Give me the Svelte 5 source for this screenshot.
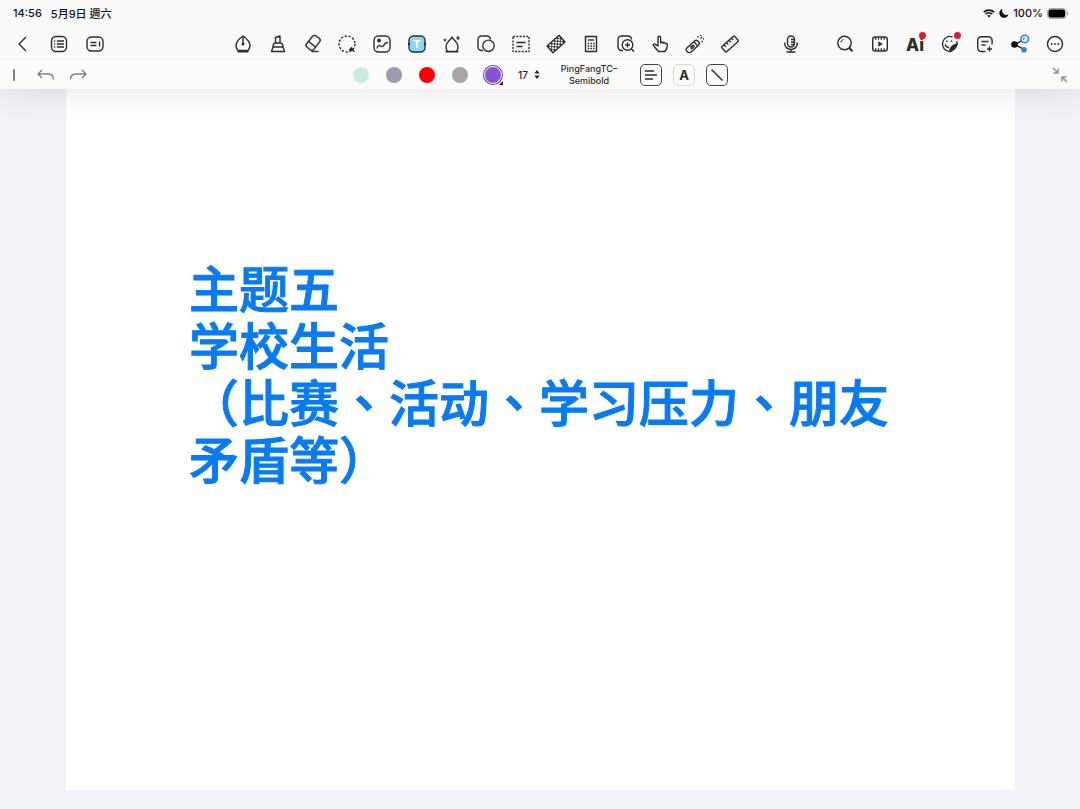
<script>
    const tools = [
        { label: 'Pen', icon: '<path d="M10 2C6.500 4.500 3 8 3 11.500c0 2 1 3.300 2 5h10c1-1.700 2-3 2-5C17 8 13.500 4.500 10 2z"/><path d="M10 2v8M4.500 17.800h11"/><circle cx="10" cy="10" r=".8" fill="currentColor"/>' },
        { label: 'Highlighter', icon: '<path d="M7.500 9V3.500L12 2v7M5 13c0-3 1-4 3-4h4c2 0 3 1 3 4zM5 13l-1.500 4.500h13L15 13"/>' },
        { label: 'Eraser', icon: '<g transform="rotate(38 10 9)"><rect x="5.500" y="1.500" width="9" height="14.500" rx="2.500"/><path d="M5.500 10.500h9"/></g><path d="M8.500 17.500h7"/>' },
        { label: 'Lasso', icon: '<circle cx="10" cy="10" r="8" stroke-dasharray="2.300 1.600"/><path d="M12 16l2.500-2.800 1 1.800 2 2.500-2.500-1z" fill="currentColor" stroke-width="1"/>' },
        { label: 'Image', icon: '<rect x="2" y="2" width="16" height="16" rx="4.500"/><circle cx="7" cy="6.500" r="1.200" fill="currentColor"/><path d="M5 14.500c.5-3 2-3.500 3.500-2.500s3 .5 3.500-1 2-2.500 4-2.500"/>' },
        { label: 'Text', icon: '<rect x="2" y="2" width="16" height="16" rx="4.500" fill="#8dd6f6"/><circle cx="2" cy="10" r="1.200" fill="currentColor" stroke="none"/><circle cx="18" cy="10" r="1.200" fill="currentColor" stroke="none"/><text x="10" y="14" text-anchor="middle" font-size="11" font-weight="700" fill="#fff" stroke="none">T</text>' },
        { label: 'Elements', icon: '<path d="M10 3c-1.500 3.500-6 5-6 9.500 0 2 .6 3.500 1.500 5h9c.9-1.500 1.500-3 1.500-5C16 8 11.500 6.500 10 3zM3.500 17.800h13"/><path d="M3 4.500v3M1.500 6h3M16 2v4M14 4h4" stroke-width="1.200"/>' },
        { label: 'Shapes', icon: '<path d="M7 16.500H5.500a3.500 3.500 0 0 1-3.500-3.500V5.500A3.500 3.500 0 0 1 5.500 2H11a3.500 3.500 0 0 1 3.500 3.500"/><circle cx="12.500" cy="11.800" r="5.700"/>' },
        { label: 'Text frame', icon: '<rect x="2" y="2.500" width="16" height="15" stroke-dasharray="2 1.300"/><path d="M5.500 8.500h9M5.500 12.500h6"/>' },
        { label: 'Tape', icon: '<g transform="rotate(-42 10 10)"><rect x="2" y="5.500" width="16" height="9"/><path d="M2 7h16M2 11h16" stroke-width="2" stroke-dasharray="2 2"/><path d="M4 9h14M4 13h14" stroke-width="2" stroke-dasharray="2 2"/></g>' },
        { label: 'Calculator', icon: '<rect x="4.500" y="2.500" width="11" height="15"/><path d="M7 6h6"/><path d="M6.700 9.500h7M6.700 12h7M6.700 14.500h7" stroke-dasharray="1.500 1.200"/>' },
        { label: 'Zoom window', icon: '<path d="M7 16.500H5.500A3.500 3.500 0 0 1 2 13V5.500A3.500 3.500 0 0 1 5.500 2H12a3.500 3.500 0 0 1 3.500 3.500"/><circle cx="11.500" cy="11" r="5.300"/><path d="M9 11h5M11.500 8.500v5M15.300 14.800l2.800 3"/>' },
        { label: 'Hand', icon: '<path d="M8 12V3.500a1.300 1.300 0 0 1 2.600 0V9c.2-1.300 2.300-1.300 2.500.2.400-1 2.200-.8 2.300.6.500-.8 2-.5 2 .9 0 2.300-.4 4.300-2.400 6.800H8.500C6.800 16 5.500 14 3.500 11.500c-.8-1.200.7-2.200 1.800-1.200z"/>' },
        { label: 'Laser pointer', icon: '<g transform="rotate(-42 8 12)"><rect x="0" y="9.300" width="15" height="5.800" rx="2.500"/><path d="M11.500 9.500V15"/><rect x="5" y="11.300" width="4" height="1.800" rx=".9"/></g><path d="M13 3.500V2M15.500 4.500L17 3M16.500 7.500H18M15.800 2V1M18 5l1-.2"/>' },
        { label: 'Ruler', icon: '<g transform="rotate(-42 10 10)"><rect x="1.500" y="6.500" width="17" height="7" rx=".8"/><path d="M5 6.500v2.800M8.300 6.500v2.800M11.700 6.500v2.800M15 6.500v2.800"/></g>' }
    ];

    const actions = [
        { label: 'Search', icon: '<circle cx="9.500" cy="9" r="6.700"/><path d="M14.300 14l3.200 3.300" stroke-width="2"/><path d="M5.800 8.500A3.500 3.500 0 0 1 8.500 5.500" stroke-width="1"/>' },
        { label: 'Playback', icon: '<rect x="2.700" y="3" width="14.600" height="14" rx="2.500"/><path d="M5 4.800h11M5 15.200h11" stroke-width="2" stroke-dasharray="1.300 1.500"/><path d="M8.300 7.300v5.400l4.500-2.700z" fill="currentColor" stroke="none"/>' },
        { label: 'AI', badge: true, icon: '<text x="10" y="17" text-anchor="middle" font-size="17" font-weight="800" fill="currentColor" stroke="none">Ai</text>' },
        { label: 'Stickers', badge: true, icon: '<path d="M12.500 2.800A7.600 7.600 0 1 0 10 17.600c3.500-1.600 6-4 7-7.600.2-1-.1-2-.4-2.700"/><path d="M10 17.600c0-4 2.500-6.500 7-7.600-1 3.600-3.500 6-7 7.600z" fill="currentColor"/><path d="M5 10.500c.7 2 2.200 3 4 3M6.800 6.500v1.500M11.500 6.500v1.500"/>' },
        { label: 'Add note', icon: '<path d="M10.500 17.500H6.500A3.800 3.800 0 0 1 2.700 13.700V6.500a3.800 3.800 0 0 1 3.800-3.800h6.800a3.800 3.800 0 0 1 3.800 3.800v4M6.500 7.500h7M6.500 11h4M14.500 12.500v5M12 15h5"/>' },
        { label: 'Share', icon: '<path d="M5 10.500l8-4.500M5 10.500l9 5" stroke="#111"/><circle cx="4.500" cy="10.500" r="3.300" fill="#111" stroke="none"/><circle cx="14.700" cy="5" r="3.800" fill="#e9f3fe" stroke="#2f83de" stroke-width="1.600"/><path d="M13.500 6V4.200h2" stroke="#2f83de" stroke-width="1"/><circle cx="14" cy="15.700" r="2.800" fill="#2f83de" stroke="none"/>' },
        { label: 'More', icon: '<circle cx="10" cy="10" r="7.500"/><g fill="currentColor" stroke="none"><circle cx="6.700" cy="10" r=".9"/><circle cx="10" cy="10" r=".9"/><circle cx="13.300" cy="10" r=".9"/></g>' }
    ];

    const colors = [
        { name: 'Mint', value: '#c9ebe2' },
        { name: 'Slate', value: '#9a9bb3' },
        { name: 'Red', value: '#fe0000' },
        { name: 'Gray', value: '#a6a6a6' },
        { name: 'Purple', value: '#8a52cc' }
    ];

    let selectedTool = $state('Text');
    let selectedColor = $state('Purple');
    let fontSize = $state('17');

    const text = '主题五\n学校生活\n（比赛、活动、学习压力、朋友矛盾等）';
</script>

{#snippet icon(body)}
    <svg viewBox="0 0 20 20" aria-hidden="true">{@html body}</svg>
{/snippet}

<div class="app">
    <header>
        <div class="status">
            <span>14:56</span>
            <span>5月9日 週六</span>
            <span class="system">
                <svg class="wifi" viewBox="0 0 12 9" aria-hidden="true"><path d="M.8 3.200a7.500 7.500 0 0 1 10.400 0M2.700 5.200a4.700 4.700 0 0 1 6.600 0" fill="none" stroke="#111" stroke-width="1.700"/><path d="M4.300 6.700a2.500 2.500 0 0 1 3.400 0L6 8.500z" fill="#111"/></svg>
                <svg class="moon" viewBox="0 0 10 10" aria-hidden="true"><path d="M3.500.7A4.700 4.700 0 1 0 9.500 6.600 4.500 4.500 0 0 1 3.500.7z" fill="#111"/></svg>
                <span>100%</span>
                <svg class="battery" viewBox="0 0 22 11" aria-hidden="true"><rect x=".5" y=".5" width="18.500" height="10" rx="3" fill="#ddd" stroke="#aaa"/><rect x="1.500" y="1.500" width="16.500" height="8" rx="2" fill="#000"/><path d="M20.500 4v3" stroke="#aaa" stroke-width="1.300"/></svg>
            </span>
        </div>

        <div class="toolbar">
            <nav class="left">
                <button aria-label="Back">{@render icon('<path d="M13 3L6 10l7 7"/>')}</button>
                <button aria-label="Outline">{@render icon('<rect x="2.500" y="2.500" width="15" height="15" rx="4.500"/><path d="M8 7h7M8 10h7M8 13h7"/><path d="M5 7h1.200M5 10h1.200M5 13h1.200"/>')}</button>
                <button aria-label="Pages">{@render icon('<rect x="2" y="3" width="16" height="14" rx="4.500"/><path d="M5.500 8.500h6M5.500 11.500h6M14.500 7.500v5"/>')}</button>
            </nav>
            <div class="tools">
                {#each tools as tool}
                    <button aria-label={tool.label} aria-pressed={selectedTool === tool.label} onclick={() => (selectedTool = tool.label)}>
                        {@render icon(tool.icon)}
                    </button>
                {/each}
            </div>
            <button class="mic" aria-label="Record">{@render icon('<rect x="6.500" y="2" width="7" height="11" rx="3.500"/><path d="M3.800 8.500v1.500a6.200 5.500 0 0 0 12.400 0V8.500M10 15.500V18M5.500 18h9M10 5.500h3M10 8h3M10 10.500h3"/>')}</button>
            <div class="actions">
                {#each actions as action}
                    <button aria-label={action.label}>
                        {@render icon(action.icon)}
                        {#if action.badge}<i class="badge"></i>{/if}
                    </button>
                {/each}
            </div>
        </div>

        <div class="options">
            <div class="history">
                <span class="grip"></span>
                <button aria-label="Undo">{@render icon('<path d="M6 5L2 9l4 4M2 9h10c3.500 0 5.500 2 5.500 5.500"/>')}</button>
                <button aria-label="Redo">{@render icon('<path d="M14 5l4 4-4 4M18 9H8c-3.500 0-5.500 2-5.500 5.500"/>')}</button>
            </div>
            <div class="format">
                {#each colors as color}
                    <button
                        class="swatch"
                        class:active={selectedColor === color.name}
                        aria-label={color.name}
                        onclick={() => (selectedColor = color.name)}
                    ><i style="background: {color.value}"></i></button>
                {/each}
                <input aria-label="Font size" bind:value={fontSize}>
                <button class="stepper" aria-label="Change size"><svg viewBox="0 0 6 10" aria-hidden="true"><path d="M0 4l3-4 3 4zM0 6l3 4 3-4z" fill="#222"/></svg></button>
                <button class="font">PingFangTC–<br>Semibold</button>
                <button class="box" aria-label="Alignment">{@render icon('<path d="M4 6h9M4 10h12M4 14h8"/>')}</button>
                <button class="box light">A</button>
                <button class="box" aria-label="Line">{@render icon('<path d="M4.500 4.500l11 11"/>')}</button>
            </div>
            <button class="collapse" aria-label="Collapse">{@render icon('<path d="M3 3l5 5M8 3.500V8H3.500M17 17l-5-5M12 16.500V12h4.500"/>')}</button>
        </div>
    </header>

    <main>
        <article>
            <p lang="zh-Hant">{text}</p>
        </article>
    </main>
</div>

<style>
    :global(body) {
        margin: 0;
        background: #f2f1f7;
    }

    .app {
        min-height: 100vh;
        display: flex;
        flex-direction: column;
        font-family: Inter, "Noto Sans CJK TC", sans-serif;
        color: #1c1c1e;
    }

    header {
        position: relative;
        background: #f9f9fa;
        box-shadow: 0 2px 32px rgba(0, 0, 0, .1);
    }

    button {
        display: flex;
        align-items: center;
        justify-content: center;
        padding: 0;
        border: 0;
        background: none;
        font: inherit;
        color: #2c2c2e;
    }

    button svg {
        width: 20px;
        height: 20px;
        fill: none;
        stroke: currentColor;
        stroke-width: 1.4;
        stroke-linejoin: round;
    }

    .status {
        display: flex;
        align-items: center;
        gap: 9px;
        height: 26px;
        padding: 0 11px 0 13px;
        font-size: 11px;
        font-weight: 500;
        color: #111;
    }

    .system {
        display: flex;
        align-items: center;
        gap: 4px;
        margin-left: auto;
    }

    .wifi {
        width: 12px;
        height: 9px;
    }

    .moon {
        width: 10px;
        height: 10px;
    }

    .battery {
        width: 22px;
        height: 11px;
    }

    .toolbar {
        display: flex;
        align-items: center;
        height: 34px;
        padding: 2px 8px 0 6px;
        box-sizing: border-box;
        border-bottom: 1px solid #f0f0f2;
    }

    .toolbar button {
        position: relative;
        width: 34px;
        height: 31px;
    }

    .left {
        display: flex;
        gap: 2px;
    }

    .tools {
        display: flex;
        justify-content: space-between;
        width: 521px;
        margin-left: auto;
    }

    .toolbar .mic {
        margin: 0 20px 0 27px;
    }

    .actions {
        display: flex;
        gap: 1px;
    }

    .badge {
        position: absolute;
        top: 4px;
        right: 6px;
        width: 7px;
        height: 7px;
        border-radius: 50%;
        background: #e3182d;
    }

    .options {
        display: grid;
        grid-template-columns: 1fr auto 1fr;
        align-items: center;
        height: 29px;
        padding: 0 10px 0 13px;
        background: #fbfbfc;
    }

    .history {
        display: flex;
        align-items: center;
        gap: 12px;
    }

    .history button {
        color: #808084;
    }

    .grip {
        width: 2px;
        height: 12px;
        margin-right: 9px;
        border-radius: 1px;
        background: #808084;
    }

    .format {
        display: flex;
        align-items: center;
        gap: 11px;
        margin-right: 5px;
    }

    .swatch {
        position: relative;
        width: 22px;
        height: 22px;
    }

    .swatch i {
        width: 16px;
        height: 16px;
        border-radius: 50%;
    }

    .swatch.active i {
        border: 1px solid #fff;
        box-shadow: 0 0 0 1px #5b3a8c;
    }

    .swatch.active::after {
        content: "";
        position: absolute;
        right: 1px;
        bottom: 1px;
        border: 2px solid #222;
        border-top-color: transparent;
        border-left-color: transparent;
    }

    input {
        width: 16px;
        padding: 0;
        border: 0;
        background: none;
        font: 500 10px Inter, sans-serif;
        text-align: center;
        color: #1c1c1e;
    }

    .stepper {
        width: 6px;
        margin-left: -8px;
    }

    .stepper svg {
        width: 6px;
        height: 9px;
        stroke: none;
    }

    .font {
        width: 76px;
        margin-right: 2px;
        font-size: 9px;
        font-weight: 500;
        line-height: 12px;
    }

    .box {
        width: 22px;
        height: 22px;
        border: 1px solid #444;
        border-radius: 5px;
        font-size: 13px;
        font-weight: 700;
    }

    .box.light {
        border-color: #d8d8da;
    }

    .collapse {
        justify-self: end;
        color: #8e8e92;
    }

    main {
        flex: 1;
        padding: 0 65px 19px 66px;
    }

    article {
        min-height: 701px;
        box-sizing: border-box;
        padding: 169px 120px 40px 123px;
        background: #fff;
    }

    p {
        margin: 0;
        font-family: "Noto Sans CJK TC", sans-serif;
        font-size: 50px;
        font-weight: 500;
        line-height: 57px;
        white-space: pre-line;
        color: #087bf2;
        -webkit-text-stroke: 1px #087bf2;
    }
</style>
